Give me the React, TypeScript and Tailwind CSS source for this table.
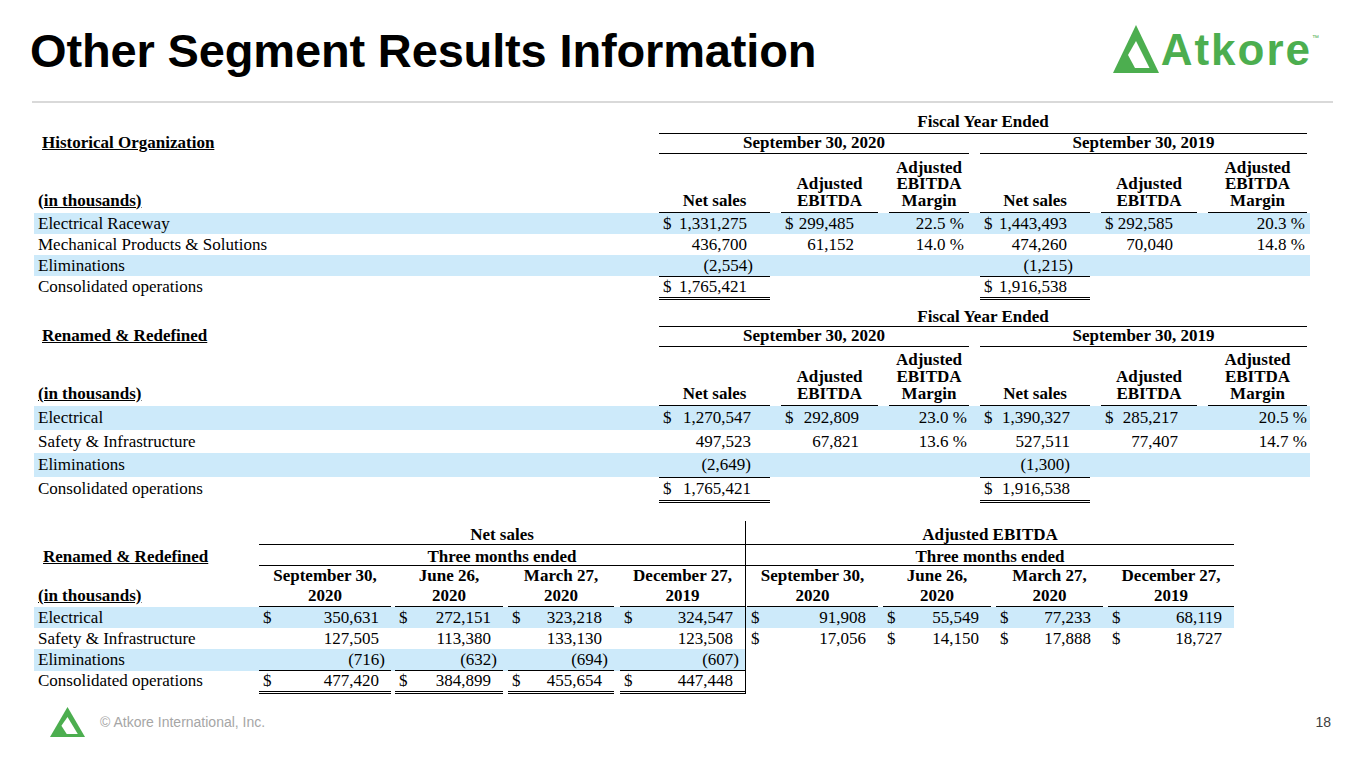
import React from 'react';

type V = { d?: boolean; v: string } | null;
type FyRow = { label: string; vals: V[]; band?: boolean; line?: 'single' | 'double' };

type FyCfg = {
  heading: string;
  mt: string;
  rowA: string;
  rowB: string;
  rowC: string;
  rowH: string;
  rowTotal: string;
  pr: string[];
  hang: boolean;
};

const Mark: React.FC<{ className?: string }> = ({ className }) => (
  <svg viewBox="0 0 46 48" preserveAspectRatio="none" className={className}>
    <path d="M23 0L46 48H0Z" fill="#4cae4f" />
    <path d="M23 16L36.5 43H22L15 30Z" fill="#ffffff" />
  </svg>
);

const Amt: React.FC<{ v: string; hang: boolean }> = ({ v, hang }) => {
  if (hang && v.endsWith(')')) {
    return (
      <span>
        {v.slice(0, -1)}
        <span className="-mr-[6px]">)</span>
      </span>
    );
  }
  return <span>{v}</span>;
};

const fyHeads: string[][] = [
  ['Net sales'],
  ['Adjusted', 'EBITDA'],
  ['Adjusted', 'EBITDA', 'Margin'],
  ['Net sales'],
  ['Adjusted', 'EBITDA'],
  ['Adjusted', 'EBITDA', 'Margin'],
];

const fyGrid = 'grid w-[1276px] grid-cols-[614px_111px_97px_80px_110px_96px_99px] gap-x-[11px] pr-[3px]';

const FyTable: React.FC<{ cfg: FyCfg; rows: FyRow[] }> = ({ cfg, rows }) => (
  <div className={cfg.mt}>
    <div className={fyGrid}>
      <div />
      <div className={`col-span-6 border-b border-black text-center font-bold ${cfg.rowA}`}>Fiscal Year Ended</div>
    </div>
    <div className={`${fyGrid} ${cfg.rowB}`}>
      <div className="pl-[8px] font-bold">
        <span className="underline underline-offset-[1px]">{cfg.heading}</span>
      </div>
      <div className="col-span-3 border-b border-black text-center font-bold">September 30, 2020</div>
      <div className="col-span-3 border-b border-black text-center font-bold">September 30, 2019</div>
    </div>
    <div className={`${fyGrid} ${cfg.rowC}`}>
      <div className="flex flex-col justify-end pl-[4px] pb-[4px] font-bold">
        <span className="underline underline-offset-[1px]">(in thousands)</span>
      </div>
      {fyHeads.map((h, i) => (
        <div key={i} className="flex flex-col justify-end border-b border-black pb-[3px] text-center font-bold">
          {h.map((t) => (
            <span key={t}>{t}</span>
          ))}
        </div>
      ))}
    </div>
    {rows.map((r) => (
      <div
        key={r.label}
        className={`${fyGrid} ${r.line === 'double' ? cfg.rowTotal : cfg.rowH} ${r.band ? 'bg-[#cdeafa]' : ''}`}
      >
        <div className="pl-[4px] whitespace-nowrap">{r.label}</div>
        {r.vals.map((c, i) => {
          const sales = i === 0 || i === 3;
          const margin = i === 2 || i === 5;
          const ln =
            sales && r.line === 'single'
              ? 'border-b border-black'
              : sales && r.line === 'double'
                ? 'border-b-[3px] border-double border-black'
                : '';
          if (!c) return <div key={i} className={ln} />;
          if (margin)
            return (
              <div key={i} className={`text-right ${cfg.pr[i]}`}>
                {c.v}
              </div>
            );
          return (
            <div key={i} className={`flex justify-between pl-[4px] ${cfg.pr[i]} ${ln}`}>
              <span>{c.d ? '$' : ''}</span>
              <Amt v={c.v} hang={cfg.hang} />
            </div>
          );
        })}
      </div>
    ))}
  </div>
);

const t1: FyRow[] = [
  {
    label: 'Electrical Raceway',
    band: true,
    vals: [
      { d: true, v: '1,331,275' },
      { d: true, v: '299,485' },
      { v: '22.5 %' },
      { d: true, v: '1,443,493' },
      { d: true, v: '292,585' },
      { v: '20.3 %' },
    ],
  },
  {
    label: 'Mechanical Products & Solutions',
    vals: [{ v: '436,700' }, { v: '61,152' }, { v: '14.0 %' }, { v: '474,260' }, { v: '70,040' }, { v: '14.8 %' }],
  },
  { label: 'Eliminations', band: true, line: 'single', vals: [{ v: '(2,554)' }, null, null, { v: '(1,215)' }, null, null] },
  {
    label: 'Consolidated operations',
    line: 'double',
    vals: [{ d: true, v: '1,765,421' }, null, null, { d: true, v: '1,916,538' }, null, null],
  },
];

const t2: FyRow[] = [
  {
    label: 'Electrical',
    band: true,
    vals: [
      { d: true, v: '1,270,547' },
      { d: true, v: '292,809' },
      { v: '23.0 %' },
      { d: true, v: '1,390,327' },
      { d: true, v: '285,217' },
      { v: '20.5 %' },
    ],
  },
  {
    label: 'Safety & Infrastructure',
    vals: [{ v: '497,523' }, { v: '67,821' }, { v: '13.6 %' }, { v: '527,511' }, { v: '77,407' }, { v: '14.7 %' }],
  },
  { label: 'Eliminations', band: true, line: 'single', vals: [{ v: '(2,649)' }, null, null, { v: '(1,300)' }, null, null] },
  {
    label: 'Consolidated operations',
    line: 'double',
    vals: [{ d: true, v: '1,765,421' }, null, null, { d: true, v: '1,916,538' }, null, null],
  },
];

const cfg1: FyCfg = {
  heading: 'Historical Organization',
  mt: 'mt-[8px]',
  rowA: 'h-[23px] leading-[22px]',
  rowB: 'h-[20px] leading-[17px]',
  rowC: 'h-[59px] leading-[16.5px]',
  rowH: 'h-[21px] leading-[21px]',
  rowTotal: 'h-[24px] leading-[21px]',
  pr: ['pr-[23px]', 'pr-[24px]', 'pr-[5px]', 'pr-[23px]', 'pr-[24px]', 'pr-[2px]'],
  hang: true,
};

const cfg2: FyCfg = {
  heading: 'Renamed & Redefined',
  mt: 'mt-[5px]',
  rowA: 'h-[22px] leading-[21px] pt-[1px]',
  rowB: 'h-[20px] leading-[17px]',
  rowC: 'h-[59px] leading-[17px]',
  rowH: 'h-[23.5px] leading-[23.5px]',
  rowTotal: 'h-[26.5px] leading-[23.5px]',
  pr: ['pr-[19px]', 'pr-[19px]', 'pr-[2px]', 'pr-[20px]', 'pr-[19px]', 'pr-[0px]'],
  hang: false,
};

/* three months table */
const g3 = 'grid w-[1200px] grid-cols-[225px_132px_112px_111px_132px_132px_113px_112px_131px]';
const inner = ['', 'ml-[4px]', 'ml-[5px]', 'ml-[6px]', 'ml-[1px]', 'ml-[5px]', 'ml-[5px]', 'ml-[5px]'];
const qHeads: [string, string][] = [
  ['September 30,', '2020'],
  ['June 26,', '2020'],
  ['March 27,', '2020'],
  ['December 27,', '2019'],
  ['September 30,', '2020'],
  ['June 26,', '2020'],
  ['March 27,', '2020'],
  ['December 27,', '2019'],
];

type QRow = { label: string; vals: V[]; band?: 'full' | 'half'; line?: 'single' | 'double' };

const t3: QRow[] = [
  {
    label: 'Electrical',
    band: 'full',
    vals: [
      { d: true, v: '350,631' },
      { d: true, v: '272,151' },
      { d: true, v: '323,218' },
      { d: true, v: '324,547' },
      { d: true, v: '91,908' },
      { d: true, v: '55,549' },
      { d: true, v: '77,233' },
      { d: true, v: '68,119' },
    ],
  },
  {
    label: 'Safety & Infrastructure',
    vals: [
      { v: '127,505' },
      { v: '113,380' },
      { v: '133,130' },
      { v: '123,508' },
      { d: true, v: '17,056' },
      { d: true, v: '14,150' },
      { d: true, v: '17,888' },
      { d: true, v: '18,727' },
    ],
  },
  {
    label: 'Eliminations',
    band: 'half',
    line: 'single',
    vals: [{ v: '(716)' }, { v: '(632)' }, { v: '(694)' }, { v: '(607)' }, null, null, null, null],
  },
  {
    label: 'Consolidated operations',
    line: 'double',
    vals: [
      { d: true, v: '477,420' },
      { d: true, v: '384,899' },
      { d: true, v: '455,654' },
      { d: true, v: '447,448' },
      null,
      null,
      null,
      null,
    ],
  },
];

const QuarterTable: React.FC = () => (
  <div className="mt-[18px]">
    <div className={`${g3} h-[24px] leading-[17px]`}>
      <div />
      <div className="col-span-4 border-b border-r border-black pt-[4.5px] text-center font-bold">Net sales</div>
      <div className="col-span-4 border-b border-black pt-[4.5px] text-center font-bold">Adjusted EBITDA</div>
    </div>
    <div className={`${g3} h-[21px] leading-[17px]`}>
      <div className="pl-[9px] pt-[2.5px] font-bold">
        <span className="underline underline-offset-[1px]">Renamed &amp; Redefined</span>
      </div>
      <div className="col-span-4 border-b border-r border-black pt-[2.5px] text-center font-bold">Three months ended</div>
      <div className="col-span-4 border-b border-black pt-[2.5px] text-center font-bold">Three months ended</div>
    </div>
    <div className={`${g3} h-[41px] leading-[20px]`}>
      <div className="flex flex-col justify-end pl-[4px] pb-[1px] font-bold">
        <span className="underline underline-offset-[1px]">(in thousands)</span>
      </div>
      {qHeads.map((h, i) => (
        <div key={i} className={`flex ${i === 3 ? 'border-r border-black' : ''}`}>
          <div className={`flex flex-1 flex-col border-b border-black text-center font-bold ${inner[i]}`}>
            <span>{h[0]}</span>
            <span>{h[1]}</span>
          </div>
        </div>
      ))}
    </div>
    {t3.map((r) => {
      const band = (i: number) => (r.band === 'full' || (r.band === 'half' && i < 4) ? 'bg-[#cdeafa]' : '');
      return (
        <div key={r.label} className={`${g3} ${r.line === 'double' ? 'h-[24px]' : 'h-[21px]'} leading-[21px]`}>
          <div className={`pl-[4px] whitespace-nowrap ${r.band ? 'bg-[#cdeafa]' : ''}`}>{r.label}</div>
          {r.vals.map((c, i) => {
            const ln =
              i < 4 && r.line === 'single'
                ? 'border-b border-black'
                : i < 4 && r.line === 'double'
                  ? 'border-b-[3px] border-double border-black'
                  : '';
            return (
              <div key={i} className={`flex ${band(i)} ${i === 3 ? 'border-r border-black' : ''}`}>
                <div className={`flex flex-1 justify-between pl-[4px] pr-[12px] ${inner[i]} ${ln}`}>
                  <span>{c && c.d ? '$' : ''}</span>
                  {c ? <Amt v={c.v} hang /> : <span />}
                </div>
              </div>
            );
          })}
        </div>
      );
    })}
  </div>
);

const App: React.FC = () => {
  return (
    <div className="w-[1365px] h-[768px] overflow-hidden bg-white font-['Liberation_Sans',Arial,sans-serif]">
      <header className="flex h-[101px] items-start justify-between pl-[30px] pr-[46px] pt-[27px]">
        <h1 className="text-[47px] font-bold leading-none tracking-[-0.15px] text-black">
          Other Segment Results Information
        </h1>
        <div className="-mt-[2px] flex items-start">
          <Mark className="h-[48px] w-[46px]" />
          <span className="ml-[2px] mt-[3px] text-[44px] font-bold leading-none tracking-[2px] text-[#4cae4f]">
            Atkore
          </span>
          <span className="mt-[9px] text-[7px] leading-none text-[#4cae4f]">™</span>
        </div>
      </header>
      <div className="ml-[32px] mr-[32px] h-[2px] bg-[#d9d9d9]" />

      <div className="pl-[34px] font-['Liberation_Serif','Times_New_Roman',serif] text-[17px] text-black">
        <FyTable cfg={cfg1} rows={t1} />
        <FyTable cfg={cfg2} rows={t2} />
        <QuarterTable />
      </div>

      <footer className="mt-[13px] flex h-[30px] items-center pl-[50px] pr-[34px]">
        <Mark className="h-[30px] w-[35px]" />
        <span className="ml-[15px] text-[14px] text-[#a6a6a6]">© Atkore International, Inc.</span>
        <span className="ml-auto text-[14px] text-[#404040]">18</span>
      </footer>
    </div>
  );
};

export default App;
